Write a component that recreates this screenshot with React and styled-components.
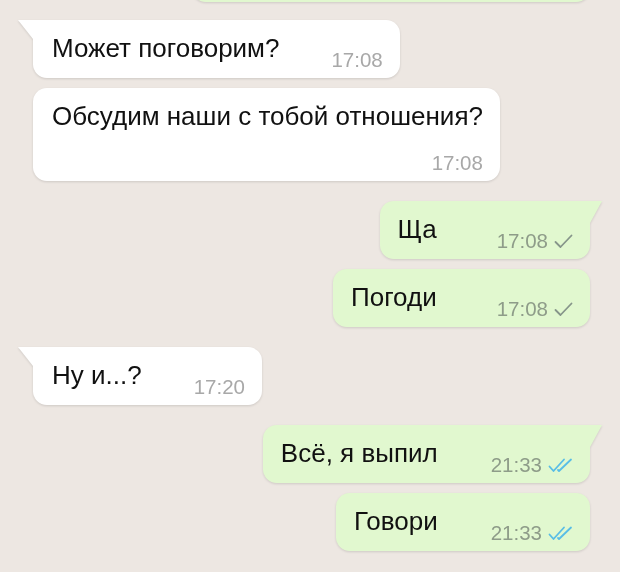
import React from "react";
import styled, { createGlobalStyle, css } from "styled-components";

const GlobalStyle = createGlobalStyle`
  html, body {
    margin: 0;
    padding: 0;
    height: 572px;
    overflow: hidden;
    background: #ede7e2;
  }
  body {
    font-family: "Liberation Sans", Arial, sans-serif;
  }
`;

const Chat = styled.div`
  display: flex;
  flex-direction: column;
  padding: 0 30px 0 33px;
`;

const Row = styled.div`
  display: flex;
  justify-content: ${(p) => (p.$out ? "flex-end" : "flex-start")};
  margin-top: ${(p) => p.$gap}px;
`;

const Bubble = styled.div`
  position: relative;
  display: flex;
  flex-direction: ${(p) => (p.$wrap ? "column" : "row")};
  align-items: ${(p) => (p.$wrap ? "stretch" : "flex-end")};
  box-sizing: border-box;
  min-height: 58px;
  padding: 13px 17px 7px ${(p) => (p.$out ? 18 : 19)}px;
  border-radius: 14px;
  background: ${(p) => (p.$out ? "#e1f8cf" : "#ffffff")};
  filter: drop-shadow(0 1px 1px rgba(0, 0, 0, 0.13));
  ${(p) => p.$width && css`width: ${p.$width}px;`}

  ${(p) =>
    p.$tail &&
    !p.$out &&
    css`
      border-top-left-radius: 0;
      &::before {
        content: "";
        position: absolute;
        top: 0;
        left: -15px;
        width: 15px;
        height: 19px;
        background: inherit;
        clip-path: polygon(0 0, 100% 0, 100% 100%);
      }
    `}

  ${(p) =>
    p.$tail &&
    p.$out &&
    css`
      border-top-right-radius: 0;
      &::before {
        content: "";
        position: absolute;
        top: 0;
        right: -12px;
        width: 12px;
        height: 22px;
        background: inherit;
        clip-path: polygon(0 0, 100% 0, 0 100%);
      }
    `}
`;

const Text = styled.span`
  font-size: 26px;
  line-height: 30px;
  color: #111;
  white-space: nowrap;
  margin-bottom: 8px;
`;

const Meta = styled.span`
  display: flex;
  align-items: center;
  justify-content: flex-end;
  gap: 6px;
  margin-left: ${(p) => (p.$out ? (p.$read ? 53 : 60) : 52)}px;
  ${(p) =>
    p.$wrap &&
    css`
      margin-left: 0;
      margin-top: 13px;
    `}
`;

const Time = styled.span`
  font-size: 20.5px;
  line-height: 22px;
  color: ${(p) => (p.$out ? "#8e9c89" : "#a8a8a8")};
  white-space: nowrap;
`;

const Check = () => (
  <svg width="19" height="15" viewBox="0 0 19 15" fill="none">
    <polyline
      points="1.5,8 6.5,13 17.5,1.5"
      stroke="#86958a"
      strokeWidth="1.8"
      strokeLinecap="round"
      strokeLinejoin="round"
    />
  </svg>
);

const DoubleCheck = () => (
  <svg width="25" height="15" viewBox="0 0 25 15" fill="none">
    <polyline
      points="1.5,8.5 5.5,13 16,1.5"
      stroke="#58bde6"
      strokeWidth="1.8"
      strokeLinecap="round"
      strokeLinejoin="round"
    />
    <polyline
      points="10,12 11,13 23,1.5"
      stroke="#58bde6"
      strokeWidth="1.8"
      strokeLinecap="round"
      strokeLinejoin="round"
    />
  </svg>
);

// the first bubble is scrolled almost out of view: only its bottom edge shows
const messages = [
  { out: true, empty: true, gap: -56, width: 398 },
  { out: false, text: "Может поговорим?", time: "17:08", tail: true, gap: 18 },
  { out: false, text: "Обсудим наши с тобой отношения?", time: "17:08", wrap: true, gap: 10 },
  { out: true, text: "Ща", time: "17:08", status: "sent", tail: true, gap: 20 },
  { out: true, text: "Погоди", time: "17:08", status: "sent", gap: 10 },
  { out: false, text: "Ну и...?", time: "17:20", tail: true, gap: 20 },
  { out: true, text: "Всё, я выпил", time: "21:33", status: "read", tail: true, gap: 20 },
  { out: true, text: "Говори", time: "21:33", status: "read", gap: 10 },
];

export default function App() {
  return (
    <>
      <GlobalStyle />
      <Chat>
        {messages.map((m, i) => (
          <Row key={i} $out={m.out} $gap={m.gap}>
            <Bubble $out={m.out} $tail={m.tail} $wrap={m.wrap} $width={m.width}>
              {!m.empty && (
                <>
                  <Text>{m.text}</Text>
                  <Meta $out={m.out} $wrap={m.wrap} $read={m.status === "read"}>
                    <Time $out={m.out}>{m.time}</Time>
                    {m.status === "sent" && <Check />}
                    {m.status === "read" && <DoubleCheck />}
                  </Meta>
                </>
              )}
            </Bubble>
          </Row>
        ))}
      </Chat>
    </>
  );
}
